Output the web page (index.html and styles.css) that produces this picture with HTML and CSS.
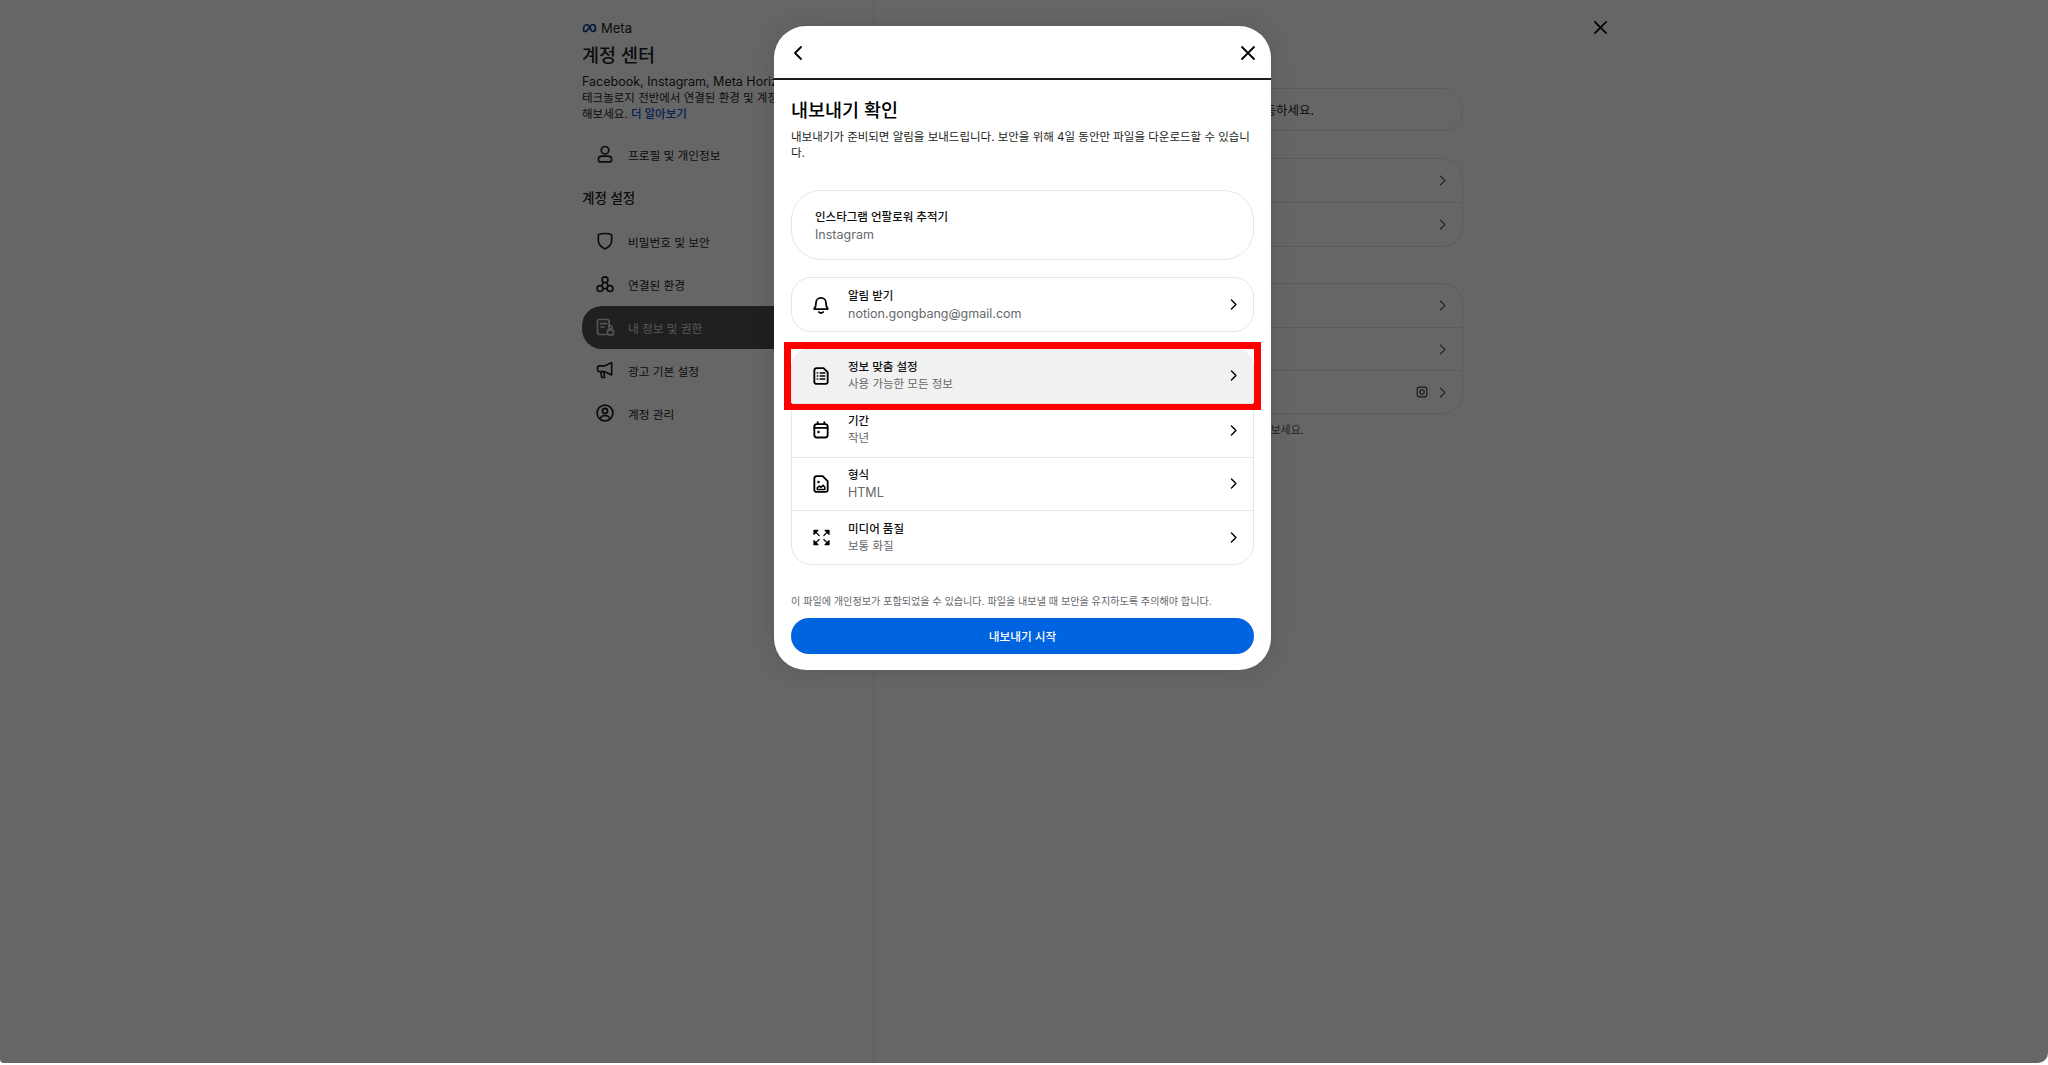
FILE: index.html
```html
<!DOCTYPE html>
<html lang="ko">
<head>
<meta charset="utf-8">
<title>내보내기 확인</title>
<link rel="stylesheet" href="styles.css">
</head>
<body>
<div class="page">
  <aside class="sidebar">
    <div class="brand">
      <svg class="brand-mark" viewBox="0 0 15 10"><path d="M1.500 7C1.500 4 3 1.500 5 1.500c2.700 0 3.500 7 6 7 1.500 0 2.500-1 2.500-3 0-2.500-1.300-4-2.800-4C8 1.500 6 8.500 3.300 8.500c-1.200 0-1.800-.6-1.800-1.500z"/></svg>
      <span>Meta</span>
    </div>
    <h1 class="side-title">계정 센터</h1>
    <p class="side-desc">Facebook, Instagram, Meta Horizon 등 Meta의<br><span class="side-ko">테크놀로지 전반에서 연결된 환경 및 계정 설정을 관리<br>해보세요. <a class="side-link">더 알아보기</a></span></p>
    <nav class="side-nav">
      <div class="nav-item">
        <svg class="nav-icon" viewBox="0 0 24 24"><circle cx="12" cy="7.500" r="4.500"/><path d="M4 18.500c0-2.500 2-4 4.500-4h7c2.500 0 4.500 1.500 4.500 4 0 2-1 3-3 3H7c-2 0-3-1-3-3z"/></svg>
        <span>프로필 및 개인정보</span>
      </div>
      <h2 class="nav-heading">계정 설정</h2>
      <div class="nav-item">
        <svg class="nav-icon" viewBox="0 0 24 24"><path d="M12 3c3 0 6 .6 8 1.500v7c0 5-3.500 8-8 10-4.500-2-8-5-8-10v-7C6 3.600 9 3 12 3z"/></svg>
        <span>비밀번호 및 보안</span>
      </div>
      <div class="nav-item">
        <svg class="nav-icon" viewBox="0 0 24 24"><circle cx="12" cy="7" r="3.500"/><circle cx="6" cy="17.500" r="3.500"/><circle cx="18" cy="17.500" r="3.500"/><path d="M10 10l-2 4.500M14 10l2 4.500M9.500 17.500h5"/></svg>
        <span>연결된 환경</span>
      </div>
      <div class="nav-item nav-item-active">
        <svg class="nav-icon" viewBox="0 0 24 24"><path d="M13 21H6a3 3 0 0 1-3-3V5a2 2 0 0 1 2-2h10a2 2 0 0 1 2 2v6M7 8h7M7 12h4"/><rect x="15" y="15.500" width="7" height="6" rx="1.500"/><circle cx="18.500" cy="12.500" r="2"/></svg>
        <span>내 정보 및 권한</span>
      </div>
      <div class="nav-item">
        <svg class="nav-icon" viewBox="0 0 24 24"><path d="M3 9.500c0-1.500 1-2.500 2.500-2.500H12l8-4v15l-8-4H5.500C4 14 3 13 3 11.500zM7 14l1 7h3.500l-1-7"/></svg>
        <span>광고 기본 설정</span>
      </div>
      <div class="nav-item">
        <svg class="nav-icon" viewBox="0 0 24 24"><circle cx="12" cy="12" r="9.500"/><circle cx="12" cy="9.500" r="3"/><path d="M6.500 18c1-2 3-3 5.500-3s4.500 1 5.500 3"/></svg>
        <span>계정 관리</span>
      </div>
    </nav>
  </aside>
  <main class="main">
    <div class="notice">계정 센터의 설정을 확인하고 원하는 곳으로 이동하세요.</div>
    <section class="group group-first">
      <div class="group-row"><span>내 정보 내보내기</span><svg class="chev" viewBox="0 0 16 16"><path d="M5.500 2.500 11 8l-5.500 5.500"/></svg></div>
      <div class="group-row"><span>내 정보 액세스</span><svg class="chev" viewBox="0 0 16 16"><path d="M5.500 2.500 11 8l-5.500 5.500"/></svg></div>
    </section>
    <section class="group group-second">
      <div class="group-row"><span>검색 기록</span><svg class="chev" viewBox="0 0 16 16"><path d="M5.500 2.500 11 8l-5.500 5.500"/></svg></div>
      <div class="group-row"><span>활동 내역</span><svg class="chev" viewBox="0 0 16 16"><path d="M5.500 2.500 11 8l-5.500 5.500"/></svg></div>
      <div class="group-row">
        <span>연결된 경험</span>
        <svg class="insta" viewBox="0 0 16 16"><rect x="1.500" y="1.500" width="13" height="13" rx="3.500"/><circle cx="8" cy="8" r="3"/></svg>
        <svg class="chev" viewBox="0 0 16 16"><path d="M5.500 2.500 11 8l-5.500 5.500"/></svg>
      </div>
    </section>
    <p class="main-foot">내 정보를 관리하는 방법을 자세히 알아보세요.</p>
  </main>
  <svg class="page-close" viewBox="0 0 16 16"><path d="M2 2l12 12M14 2 2 14"/></svg>
</div>
<div class="backdrop"></div>
<div class="modal">
  <header class="modal-head">
    <svg class="head-back" viewBox="0 0 16 16"><path d="M11 2 5 8l6 6"/></svg>
    <svg class="head-close" viewBox="0 0 16 16"><path d="M2 2l12 12M14 2 2 14"/></svg>
  </header>
  <div class="modal-body">
    <h2 class="modal-title">내보내기 확인</h2>
    <p class="modal-desc">내보내기가 준비되면 알림을 보내드립니다. 보안을 위해 4일 동안만 파일을 다운로드할 수 있습니다.</p>
    <div class="info-card">
      <div class="row-title">인스타그램 언팔로워 추적기</div>
      <div class="row-sub">Instagram</div>
    </div>
    <div class="list single">
      <div class="row row-single">
        <svg class="row-icon" viewBox="0 0 24 24"><path d="M12 3.500c-3.500 0-6 2.500-6 6 0 3.500-.6 5-2 6.500-.4.500 0 1 .5 1h15c.5 0 .9-.5.5-1-1.400-1.500-2-3-2-6.500 0-3.500-2.500-6-6-6z"/><path d="M9.500 20.500c1.500 1.300 3.500 1.300 5 0"/></svg>
        <div class="row-text"><div class="row-title">알림 받기</div><div class="row-sub">notion.gongbang@gmail.com</div></div>
        <svg class="chev" viewBox="0 0 16 16"><path d="M5.500 2.500 11 8l-5.500 5.500"/></svg>
      </div>
    </div>
    <div class="list stacked">
      <div class="row row-highlight">
        <svg class="row-icon" viewBox="0 0 24 24"><path d="M7 2.500h8l5 5V19a2.500 2.500 0 0 1-2.500 2.500h-11A2.500 2.500 0 0 1 4 19V5.500a3 3 0 0 1 3-3z"/><path class="thin" d="M11 8.500h5.500M11 12h5.500M11 15.500h5.500M7.500 8.500h.5M7.500 12h.5M7.500 15.500h.5"/></svg>
        <div class="row-text"><div class="row-title">정보 맞춤 설정</div><div class="row-sub row-sub-ko">사용 가능한 모든 정보</div></div>
        <svg class="chev" viewBox="0 0 16 16"><path d="M5.500 2.500 11 8l-5.500 5.500"/></svg>
      </div>
      <div class="row">
        <svg class="row-icon" viewBox="0 0 24 24"><rect x="4" y="5" width="16" height="16" rx="3"/><path d="M4 9.500h16M8 2.500V5M16 2.500V5"/><circle class="solid" cx="9" cy="14.500" r="1.500"/></svg>
        <div class="row-text"><div class="row-title">기간</div><div class="row-sub row-sub-ko">작년</div></div>
        <svg class="chev" viewBox="0 0 16 16"><path d="M5.500 2.500 11 8l-5.500 5.500"/></svg>
      </div>
      <div class="row">
        <svg class="row-icon" viewBox="0 0 24 24"><path d="M7 2.500h7l6 6V19a2.500 2.500 0 0 1-2.500 2.500h-11A2.500 2.500 0 0 1 4 19V5.500a3 3 0 0 1 3-3z"/><path class="thin" d="M7.500 18.500v-2l2.500-2 2 1.500 2.500-2.500 2 2.500v2.500z"/><circle class="solid" cx="9" cy="9.500" r="1.500"/></svg>
        <div class="row-text"><div class="row-title">형식</div><div class="row-sub">HTML</div></div>
        <svg class="chev" viewBox="0 0 16 16"><path d="M5.500 2.500 11 8l-5.500 5.500"/></svg>
      </div>
      <div class="row">
        <svg class="row-icon row-icon-small" viewBox="0 0 24 24"><path class="arrow" d="M2.500 3h5L2.500 8zM21.500 3h-5l5 5zM2.500 21h5l-5-5zM21.500 21h-5l5-5z"/><path class="arrow" d="M5 5.500 9 9.500M19 5.500 15 9.500M5 18.500 9 14.500M19 18.500 15 14.500"/></svg>
        <div class="row-text"><div class="row-title">미디어 품질</div><div class="row-sub row-sub-ko">보통 화질</div></div>
        <svg class="chev" viewBox="0 0 16 16"><path d="M5.500 2.500 11 8l-5.500 5.500"/></svg>
      </div>
    </div>
    <p class="modal-note">이 파일에 개인정보가 포함되었을 수 있습니다. 파일을 내보낼 때 보안을 유지하도록 주의해야 합니다.</p>
    <button class="primary">내보내기 시작</button>
  </div>
</div>
</body>
</html>
```

FILE: styles.css
```css
* { box-sizing: border-box; }
html, body { margin: 0; height: 100%; overflow: hidden; background: #fff; }
body { font-family: Inter, "Noto Sans CJK KR", "Noto Sans", sans-serif; color: #1c1e21; }
h1, h2, p { margin: 0; font-weight: inherit; }
svg { display: block; flex: none; fill: none; stroke: currentColor; stroke-linecap: round; stroke-linejoin: round; }

.page { display: flex; height: 1063px; background: #fff; }
.sidebar { width: 874px; flex: none; padding: 21px 0 0 582px; border-right: 1px solid #f0f0f0; }
.brand { display: flex; align-items: center; gap: 4px; height: 14px; font-size: 13px; color: #1c1e21; }
.brand-mark { width: 15px; height: 10px; stroke: #0a3d9c; stroke-width: 1.700; }
.side-title { margin-top: 7px; font-size: 18.500px; line-height: 27px; font-weight: 500; }
.side-desc { margin-top: 5px; width: 290px; font-size: 12.500px; line-height: 15.500px; white-space: nowrap; }
.side-ko { font-size: 11.500px; }
.side-link { color: #0a56d0; font-weight: 500; }
.side-nav { margin-top: 10px; }
.nav-item { display: flex; align-items: center; gap: 13px; height: 43px; padding-left: 13px; font-size: 11.700px; border-radius: 20px; }
.nav-icon { width: 20px; height: 20px; stroke-width: 2; }
.nav-item-active { background: #505050; color: #d8d8d8; }
.nav-heading { margin: 10px 0; height: 24px; line-height: 24px; font-size: 13.500px; font-weight: 500; }

.main { flex: none; width: 589px; padding: 88px 0 0 21px; }
.notice { height: 43px; padding-right: 148px; border: 1px solid #e4e6e9; border-radius: 20px; font-size: 12.500px; line-height: 43px; text-align: right; white-space: nowrap; }
.group { border: 1px solid #e4e6e9; border-radius: 20px; }
.group-first { margin-top: 27px; }
.group-second { margin-top: 36px; }
.group-row { display: flex; align-items: center; justify-content: flex-end; gap: 8px; height: 43.300px; padding: 0 13px 0 20px; border-top: 1px solid #e4e6e9; font-size: 13px; }
.group-row:first-child { border-top: 0; }
.group-row span { margin-right: auto; }
.group-row .chev { width: 13px; height: 13px; stroke: #333; stroke-width: 1.300; }
.insta { width: 12px; height: 12px; stroke-width: 1.400; color: #333; }
.main-foot { margin-top: 9px; padding-right: 159px; font-size: 11px; line-height: 14px; text-align: right; color: #555; white-space: nowrap; }
.page-close { position: absolute; left: 1593px; top: 20px; width: 15px; height: 15px; stroke: #000; stroke-width: 1.800; }

.backdrop { position: absolute; inset: 0 0 2px 0; background: rgba(0, 0, 0, .6); border-radius: 0 0 10px 4px; }

.modal { position: absolute; left: 774px; top: 26px; width: 497px; height: 644px; background: #fff; border-radius: 32px; box-shadow: 0 0 24px rgba(0, 0, 0, .12); overflow: visible; }
.modal-head { display: flex; align-items: center; justify-content: space-between; height: 54px; padding: 2px 15px 0 16px; border-bottom: 2px solid #1c1c1c; }
.head-back { width: 16px; height: 16px; stroke: #000; stroke-width: 1.800; }
.head-close { width: 16px; height: 16px; stroke: #000; stroke-width: 1.800; }
.modal-body { padding: 17px 17px 0; }
.modal-title { font-size: 18.500px; line-height: 26px; font-weight: 500; color: #000; }
.modal-desc { margin-top: 6px; font-size: 11.500px; line-height: 16px; color: #1c1e21; }
.info-card { height: 70px; margin-top: 29px; padding: 18px 23px 0; border: 1px solid #e6e6e6; border-radius: 30px; }
.row-title { font-size: 11.500px; line-height: 17px; font-weight: 500; color: #111; }
.row-sub { font-size: 12.500px; line-height: 17px; color: #65686c; }
.row-sub-ko { font-size: 11.500px; }
.list { border: 1px solid #e6e6e6; border-radius: 20px; }
.single { margin-top: 17px; }
.stacked { margin-top: 16px; }
.row { position: relative; display: flex; align-items: center; height: 53.750px; padding: 0 13px 0 19px; border-top: 1px solid #e6e6e6; }
.row:first-child { border-top: 0; }
.row-single { height: 53px; }
.row-highlight { background: #f1f1f1; border-radius: 19px 19px 0 0; }
.row-highlight::after { content: ""; position: absolute; inset: -7px -8px -7px -8px; border: 7px solid #f00; }
.row-icon { width: 20px; height: 20px; color: #000; stroke-width: 2.200; }
.row-icon-small { width: 19px; height: 19px; margin: 0 .5px; }
.thin { stroke-width: 1.800; }
.arrow { fill: currentColor; stroke-width: 1.500; }
.solid { fill: currentColor; stroke: none; }
.row-text { flex: 1; margin-left: 17px; }
.chev { width: 13px; height: 13px; stroke: #000; stroke-width: 1.700; }
.modal-note { margin-top: 27px; font-size: 10.100px; line-height: 18px; color: #65686c; white-space: nowrap; }
.primary { display: block; width: 100%; height: 36px; margin-top: 8px; border: 0; border-radius: 18px; background: #0064e0; color: #fff; font: 500 11.700px/36px Inter, "Noto Sans CJK KR", sans-serif; }
```
